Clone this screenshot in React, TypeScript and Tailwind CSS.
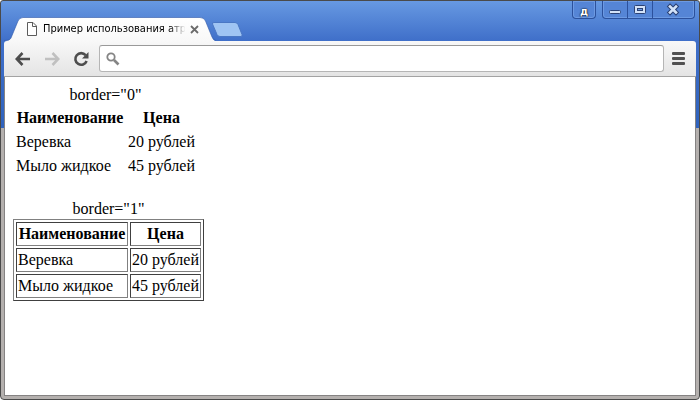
import { useState } from 'react'

const items = [
  { name: 'Веревка', price: '20 рублей' },
  { name: 'Мыло жидкое', price: '45 рублей' },
]

function WindowControls() {
  return (
    <div className="flex h-[18px] gap-[6px] pr-px">
      <button className="flex w-[24px] items-center justify-center rounded-b border border-t-0 border-[#2c519c] bg-[#5585d6] pt-1 font-['DejaVu_Sans',sans-serif] text-[10px] leading-[12px] font-bold text-white shadow-[inset_0_0_0_1px_#6d9ae2] [text-shadow:0_0_2px_#000,0_0_1px_#000]">
        д
      </button>
      <div className="flex overflow-hidden rounded-b border border-t-0 border-[#2c519c] bg-[#5585d6] shadow-[inset_0_0_0_1px_#6d9ae2]">
        <button aria-label="Minimize" className="w-[25px] border-r border-[#2c519c]">
          <svg className="block" width="24" height="17" viewBox="0 0 24 17">
            <rect x="6.500" y="9.500" width="11" height="3" rx="1" fill="#d3e2f8" stroke="#2b4275" />
          </svg>
        </button>
        <button aria-label="Maximize" className="w-[25px] border-r border-[#2c519c]">
          <svg className="block" width="24" height="17" viewBox="0 0 24 17">
            <rect x="6.500" y="4.500" width="11" height="8" rx="1" fill="#d3e2f8" stroke="#2b4275" />
            <rect x="9.500" y="7.500" width="5" height="2" fill="#6e9be3" stroke="#2b4275" />
          </svg>
        </button>
        <button aria-label="Close" className="w-[41px]">
          <svg className="block" width="41" height="17" viewBox="0 0 41 17">
            <path d="M17 5.500L23 11.500M23 5.500L17 11.500" stroke="#2b4275" strokeWidth="4.600" strokeLinecap="square" />
            <path d="M17 5.500L23 11.500M23 5.500L17 11.500" stroke="#d3e2f8" strokeWidth="2.600" strokeLinecap="square" />
          </svg>
        </button>
      </div>
    </div>
  )
}

function Tab() {
  return (
    <div className="relative h-[24px] w-[212px]">
      <svg className="absolute inset-0" width="212" height="24" viewBox="0 0 212 24">
        <defs>
          <linearGradient id="tab" x1="0" y1="0" x2="0" y2="1">
            <stop offset="0" stopColor="#ffffff" />
            <stop offset="1" stopColor="#f8f8f8" />
          </linearGradient>
        </defs>
        <path
          d="M0 24C4 24 6 23 7 21L14 4Q15.500 0.500 19 0.500H196Q200 0.500 201.500 4L208 20Q209.500 24 212 24Z"
          fill="url(#tab)"
        />
        <path
          d="M0 23.500C4 23.500 6 23 7 21L14 4Q15.500 0.500 19 0.500H196Q200 0.500 201.500 4L208 20Q209.500 23.500 212 23.500"
          fill="none"
          stroke="#3058a8"
          strokeOpacity="0.600"
        />
      </svg>
      <div className="relative flex h-full items-center pl-[22px]">
        <svg width="12" height="14" viewBox="0 0 12 14" fill="#fff" stroke="#5c5c5c">
          <path d="M1.500 0.500H7L10.500 4V13.500H1.500Z" />
          <path d="M6.500 0.500V4.500H10.500" fill="none" />
        </svg>
        <span className="ml-[5px] w-[147px] font-['DejaVu_Sans_Condensed','DejaVu_Sans',sans-serif] text-[11px] leading-[14px] whitespace-nowrap text-black [mask-image:linear-gradient(to_right,#000_86%,transparent_97%)]">
          Пример использования атри
        </span>
        <button aria-label="Close tab" className="relative">
          <svg className="block" width="9" height="9" viewBox="0 0 9 9" stroke="#6b6b6b" strokeWidth="1.800">
            <path d="M1 1L8 8M8 1L1 8" />
          </svg>
        </button>
      </div>
    </div>
  )
}

function Toolbar() {
  const [address, setAddress] = useState('')

  return (
    <div className="flex h-[36px] items-center rounded-t-[3px] border-b border-[#a3a3a3] bg-linear-to-b from-[#f8f8f8] to-[#e4e4e4] pr-[10px] pl-[11px]">
      <button aria-label="Back">
        <svg className="block" width="16" height="14" viewBox="0 0 16 14" fill="none" stroke="#4d4d4d" strokeWidth="2.600">
          <path d="M7.500 1L1.800 7L7.500 13M2 7H15" />
        </svg>
      </button>
      <button aria-label="Forward" className="ml-[13px]">
        <svg className="block" width="16" height="14" viewBox="0 0 16 14" fill="none" stroke="#c0c0c0" strokeWidth="2.600">
          <path d="M8.500 1L14.200 7L8.500 13M14 7H1" />
        </svg>
      </button>
      <button aria-label="Reload" className="ml-[13px]">
        <svg className="block" width="16" height="16" viewBox="0 0 16 16">
          <path d="M12.600 4.200A5.800 5.800 0 1 0 13.600 10" fill="none" stroke="#4d4d4d" strokeWidth="2.600" />
          <path d="M15.500 1V7.500H9Z" fill="#4d4d4d" />
        </svg>
      </button>
      <label className="ml-[10px] flex h-[27px] flex-1 items-center rounded-[3px] border border-[#b5b5b5] border-t-[#999] bg-white pl-[6px]">
        <svg width="14" height="14" viewBox="0 0 14 14" fill="none" stroke="#858585">
          <circle cx="5" cy="5" r="3.700" strokeWidth="1.800" />
          <path d="M8 8L12.500 12.500" strokeWidth="2.600" />
        </svg>
        <input
          type="text"
          aria-label="Address"
          value={address}
          onChange={e => setAddress(e.target.value)}
          className="min-w-0 flex-1 px-2 font-['Liberation_Sans',sans-serif] text-sm outline-none"
        />
      </label>
      <button aria-label="Menu" className="ml-[8px]">
        <svg className="block" width="14" height="14" viewBox="0 0 14 14" fill="#505050">
          <rect x="0" y="0" width="13" height="3" rx="1" />
          <rect x="0" y="5" width="13" height="3" rx="1" />
          <rect x="0" y="10" width="13" height="3" rx="1" />
        </svg>
      </button>
    </div>
  )
}

function PlainTable() {
  return (
    <table className="border-separate border-spacing-[2px]">
      <caption>border="0"</caption>
      <thead>
        <tr>
          <th className="w-[110px] p-px">Наименование</th>
          <th className="w-[69px] p-px">Цена</th>
        </tr>
      </thead>
      <tbody>
        {items.map(item => (
          <tr key={item.name}>
            <td className="p-px">{item.name}</td>
            <td className="p-px">{item.price}</td>
          </tr>
        ))}
      </tbody>
    </table>
  )
}

function BorderedTable() {
  const cell = 'border border-t-[#404040] border-r-[#808080] border-b-[#808080] border-l-[#404040] p-px'

  return (
    <table className="border-separate border-spacing-[2px] border border-t-[#808080] border-r-[#404040] border-b-[#404040] border-l-[#808080]">
      <caption>border="1"</caption>
      <thead>
        <tr>
          <th className={`${cell} w-[112px]`}>Наименование</th>
          <th className={`${cell} w-[71px]`}>Цена</th>
        </tr>
      </thead>
      <tbody>
        {items.map(item => (
          <tr key={item.name}>
            <td className={cell}>{item.name}</td>
            <td className={cell}>{item.price}</td>
          </tr>
        ))}
      </tbody>
    </table>
  )
}

export default function App() {
  return (
    <div className="flex min-h-screen flex-col rounded-t-[3px] rounded-b border border-[#4a4a4a] bg-[linear-gradient(#6799e2,#3f6fc9_40px,#2f62bd_127px,#b4b0ae_127px)] px-[3px] pb-[3px]">
      <header>
        <div className="flex h-[40px] justify-between">
          <div className="flex items-end">
            <Tab />
            <button aria-label="New tab" className="mb-[4px] -ml-[5px]">
              <svg className="block" width="32" height="15" viewBox="0 0 32 15">
                <path
                  d="M1.500 2Q1 0.500 3 0.500H24Q26 0.500 27 2.500L31 12.500Q31.500 14.500 30 14.500H9Q7 14.500 6 12.500Z"
                  fill="#9fc4f3"
                  stroke="#4a77c4"
                />
              </svg>
            </button>
          </div>
          <WindowControls />
        </div>
        <Toolbar />
      </header>
      <main className="flex flex-1 flex-col items-start gap-[20px] border border-t-0 border-[#858383] bg-white px-[8px] pt-[8px] font-['Liberation_Serif',serif] text-[16px] leading-[20px] text-black">
        <PlainTable />
        <BorderedTable />
      </main>
    </div>
  )
}
